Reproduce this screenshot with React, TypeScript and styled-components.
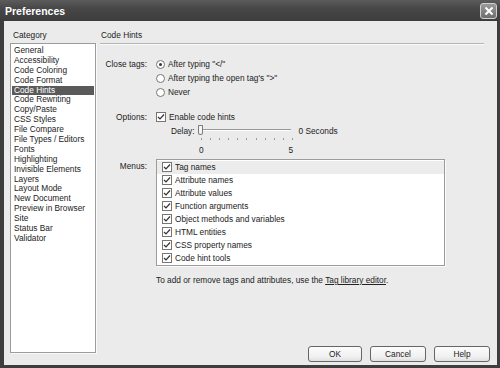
import React from "react";
import styled, { createGlobalStyle } from "styled-components";

const GlobalStyle = createGlobalStyle`
  html, body { margin: 0; padding: 0; background: #3c3c3c; }
  body { font-family: "Liberation Sans", Arial, sans-serif; font-size: 8.3px; color: #222; }
  * { box-sizing: border-box; }
`;

const Window = styled.div`
  width: 500px;
  height: 368px;
  display: flex;
  flex-direction: column;
  background: #3e3e3e;
`;

const TitleBar = styled.div`
  height: 21px;
  flex: none;
  display: flex;
  align-items: center;
  justify-content: space-between;
  padding: 0 3px 0 5px;
  background: linear-gradient(#5c5c5c, #474747 40%, #3d3d3d);
`;

const Title = styled.div`
  color: #fff;
  font-weight: bold;
  font-size: 10.5px;
`;

const CloseBtn = styled.div`
  width: 17px;
  height: 16px;
  margin-top: 1px;
  border: 1px solid #d0d0d0;
  border-radius: 3px;
  background: linear-gradient(#9a9a9a, #6e6e6e);
  display: flex;
  align-items: center;
  justify-content: center;
`;

const Frame = styled.div`
  flex: 1;
  display: flex;
  padding: 0 3px 3px 4px;
  min-height: 0;
`;

const Body = styled.div`
  flex: 1;
  display: flex;
  background: #ebebeb;
  min-height: 0;
`;

const LeftCol = styled.div`
  width: 92px;
  flex: none;
  display: flex;
  flex-direction: column;
  padding: 9px 0 0 6px;
`;

const Caption = styled.div`
  height: 11px;
  line-height: 11px;
  padding-left: 3px;
  margin-bottom: 2px;
`;

const CategoryList = styled.div`
  height: 310px;
  width: 86px;
  background: #fff;
  border: 1px solid #9c9c9c;
  box-shadow: 1px 1px 0 #fafafa;
  padding: 2px 1px;
`;

const CategoryItem = styled.div<{ $selected?: boolean }>`
  height: 9.9px;
  line-height: 9.9px;
  padding-left: 2px;
  white-space: nowrap;
  background: ${(p) => (p.$selected ? "#5a5a5a" : "transparent")};
  color: ${(p) => (p.$selected ? "#fff" : "#222")};
`;

const RightCol = styled.div`
  flex: 1;
  display: flex;
  flex-direction: column;
  padding: 9px 7px 3px 4px;
  min-width: 0;
`;

const Heading = styled.div`
  height: 14px;
  line-height: 11px;
  padding-left: 1px;
  margin-right: 6px;
  border-bottom: 1px solid #b4b4b4;
  box-shadow: 0 1px 0 #fbfbfb;
`;

const Form = styled.div`
  display: grid;
  grid-template-columns: 47px 1fr;
  column-gap: 9px;
  padding-top: 13px;
`;

const Label = styled.div<{ $top?: number }>`
  text-align: right;
  white-space: nowrap;
  line-height: 14px;
  padding-top: ${(p) => p.$top ?? 0}px;
`;

const Controls = styled.div<{ $top?: number }>`
  display: flex;
  flex-direction: column;
  padding-top: ${(p) => p.$top ?? 0}px;
`;

const OptionRow = styled.div`
  height: 14px;
  display: flex;
  align-items: center;
  gap: 3px;
  white-space: nowrap;
`;

const RadioCircle = styled.span<{ $on?: boolean }>`
  width: 9px;
  height: 9px;
  border-radius: 50%;
  border: 1px solid #767676;
  background: #fff;
  display: flex;
  align-items: center;
  justify-content: center;
  flex: none;
  &::after {
    content: "";
    width: 3px;
    height: 3px;
    border-radius: 50%;
    background: ${(p) => (p.$on ? "#333" : "transparent")};
  }
`;

const CheckBox = styled.span`
  width: 10px;
  height: 10px;
  border: 1px solid #767676;
  background: #fff;
  display: flex;
  align-items: center;
  justify-content: center;
  flex: none;
`;

const DelayRow = styled.div`
  display: flex;
  align-items: center;
  height: 14px;
  padding-left: 15px;
  gap: 3px;
`;

const SliderBox = styled.div`
  position: relative;
  width: 93px;
  height: 14px;
  margin-right: 5px;
`;

const Track = styled.div`
  position: absolute;
  left: 1px;
  right: 0;
  top: 5px;
  height: 2px;
  border-top: 1px solid #9a9a9a;
  border-bottom: 1px solid #fdfdfd;
`;

const Thumb = styled.div`
  position: absolute;
  left: 0;
  top: 1px;
  width: 5px;
  height: 10px;
  border: 1px solid #7a7a7a;
  border-radius: 1px 1px 3px 3px;
  background: #f4f4f4;
`;

const Ticks = styled.div`
  display: flex;
  justify-content: space-between;
  width: 92px;
  margin-left: 45px;
  height: 4px;
`;

const Tick = styled.span`
  width: 1px;
  height: 2px;
  background: #9a9a9a;
`;

const ScaleRow = styled.div`
  display: flex;
  justify-content: space-between;
  width: 94px;
  margin-left: 43px;
  height: 14px;
  line-height: 14px;
  padding-top: 1px;
`;

const MenuList = styled.div`
  width: 289px;
  height: 107px;
  background: #fff;
  border: 1px solid #9c9c9c;
  box-shadow: 1px 1px 0 #fafafa;
  padding-top: 1px;
`;

const MenuItem = styled.div<{ $focus?: boolean }>`
  height: 12.9px;
  display: flex;
  align-items: center;
  gap: 3px;
  padding-left: 5px;
  background: ${(p) => (p.$focus ? "#ececec" : "transparent")};
`;

const Note = styled.div`
  padding: 9px 0 0 56px;
  line-height: 10px;
  white-space: nowrap;
`;

const Link = styled.span`
  text-decoration: underline;
`;

const Buttons = styled.div`
  margin-top: auto;
  display: flex;
  justify-content: flex-end;
  gap: 8px;
`;

const Button = styled.div<{ $w: number }>`
  width: ${(p) => p.$w}px;
  height: 16px;
  border: 1px solid #666;
  border-radius: 3px;
  background: linear-gradient(#fcfcfc, #f0f0f0 70%, #e0e0e0);
  display: flex;
  align-items: center;
  justify-content: center;
`;

const Check = () => (
  <svg width="8" height="8" viewBox="0 0 8 8">
    <path d="M1 4 L3 6 L7 1.5" fill="none" stroke="#333" strokeWidth="1.2" />
  </svg>
);

const categories = [
  "General",
  "Accessibility",
  "Code Coloring",
  "Code Format",
  "Code Hints",
  "Code Rewriting",
  "Copy/Paste",
  "CSS Styles",
  "File Compare",
  "File Types / Editors",
  "Fonts",
  "Highlighting",
  "Invisible Elements",
  "Layers",
  "Layout Mode",
  "New Document",
  "Preview in Browser",
  "Site",
  "Status Bar",
  "Validator",
];

const menus = [
  "Tag names",
  "Attribute names",
  "Attribute values",
  "Function arguments",
  "Object methods and variables",
  "HTML entities",
  "CSS property names",
  "Code hint tools",
];

export default function App() {
  return (
    <>
      <GlobalStyle />
      <Window>
        <TitleBar>
          <Title>Preferences</Title>
          <CloseBtn>
            <svg width="10" height="10" viewBox="0 0 10 10">
              <path d="M1.5 1.5 L8.5 8.5 M8.5 1.5 L1.5 8.5" stroke="#fff" strokeWidth="2" />
            </svg>
          </CloseBtn>
        </TitleBar>
        <Frame>
          <Body>
            <LeftCol>
              <Caption>Category</Caption>
              <CategoryList>
                {categories.map((c) => (
                  <CategoryItem key={c} $selected={c === "Code Hints"}>
                    {c}
                  </CategoryItem>
                ))}
              </CategoryList>
            </LeftCol>
            <RightCol>
              <Heading>Code Hints</Heading>
              <Form>
                <Label>Close tags:</Label>
                <Controls>
                  <OptionRow>
                    <RadioCircle $on />
                    After typing "&lt;/"
                  </OptionRow>
                  <OptionRow>
                    <RadioCircle />
                    After typing the open tag's "&gt;"
                  </OptionRow>
                  <OptionRow>
                    <RadioCircle />
                    Never
                  </OptionRow>
                </Controls>
                <Label $top={11}>Options:</Label>
                <Controls $top={11}>
                  <OptionRow>
                    <CheckBox>
                      <Check />
                    </CheckBox>
                    Enable code hints
                  </OptionRow>
                  <DelayRow>
                    Delay:
                    <SliderBox>
                      <Track />
                      <Thumb />
                    </SliderBox>
                    0 Seconds
                  </DelayRow>
                  <Ticks>
                    {Array.from({ length: 11 }).map((_, i) => (
                      <Tick key={i} />
                    ))}
                  </Ticks>
                  <ScaleRow>
                    <span>0</span>
                    <span>5</span>
                  </ScaleRow>
                </Controls>
                <Label $top={3}>Menus:</Label>
                <Controls $top={3}>
                  <MenuList>
                    {menus.map((m, i) => (
                      <MenuItem key={m} $focus={i === 0}>
                        <CheckBox>
                          <Check />
                        </CheckBox>
                        {m}
                      </MenuItem>
                    ))}
                  </MenuList>
                </Controls>
              </Form>
              <Note>
                To add or remove tags and attributes, use the <Link>Tag library editor</Link>.
              </Note>
              <Buttons>
                <Button $w={54}>OK</Button>
                <Button $w={56}>Cancel</Button>
                <Button $w={56}>Help</Button>
              </Buttons>
            </RightCol>
          </Body>
        </Frame>
      </Window>
    </>
  );
}
